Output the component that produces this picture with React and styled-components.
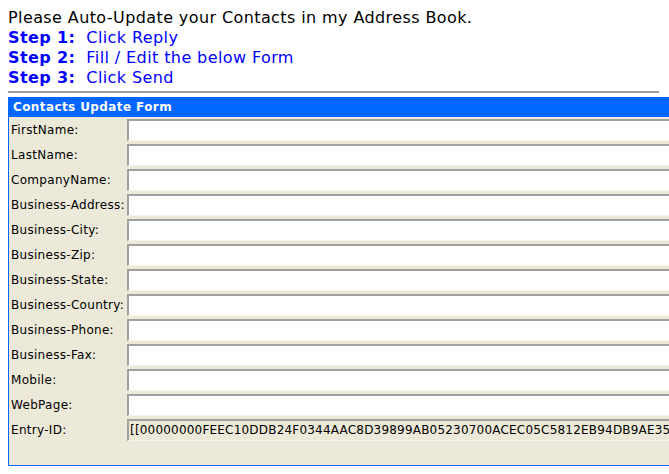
import React from "react";
import styled, { createGlobalStyle } from "styled-components";

const Global = createGlobalStyle`
  html, body { overflow: hidden; }
  body {
    margin: 8px 0 8px 8px;
    background: #ffffff;
    font-family: "DejaVu Sans", Verdana, sans-serif;
  }
`;

const Intro = styled.div`
  font-size: 16px;
  line-height: 20px;
  letter-spacing: 0.4px;
  color: #000000;
  white-space: nowrap;
`;

const StepLine = styled.div`
  color: #0000ff;
  white-space: pre;
`;

const StepLabel = styled.b`
  font-weight: bold;
`;

const Rule = styled.div`
  width: 651px;
  height: 2px;
  background: #a0a0a0;
  margin: 3px 0 4px 0;
`;

const Form = styled.div`
  width: 760px;
  border: 1px solid #0066ff;
  border-top: none;
  background: #ece9d8;
  font-family: "DejaVu Sans", Tahoma, sans-serif;
  font-size: 12px;
`;

const Header = styled.div`
  height: 20px;
  line-height: 20px;
  background: #0066ff;
  color: #ffffff;
  font-weight: bold;
  letter-spacing: 0.4px;
  margin: 0 -1px;
  padding-left: 5px;
`;

const Body = styled.div`
  display: flex;
  flex-direction: column;
  gap: 3px;
  padding: 2px 0 24px 0;
`;

const Row = styled.div`
  display: grid;
  grid-template-columns: 118px 1fr;
  align-items: center;
  height: 22px;
`;

const Label = styled.span`
  padding-left: 2px;
  color: #000000;
  letter-spacing: 0.3px;
  white-space: nowrap;
`;

const Field = styled.div`
  box-sizing: border-box;
  height: 22px;
  border-top: 2px solid #a0a0a0;
  border-left: 2px solid #a0a0a0;
  border-bottom: 1px solid #f4f3ee;
  border-right: 1px solid #f4f3ee;
  background: ${(p) => (p.$readOnly ? "#ece9d8" : "#ffffff")};
  padding-left: 1px;
  line-height: 19px;
  letter-spacing: 0.2px;
  white-space: nowrap;
  overflow: hidden;
  color: #000000;
`;

const fields = [
  "FirstName:",
  "LastName:",
  "CompanyName:",
  "Business-Address:",
  "Business-City:",
  "Business-Zip:",
  "Business-State:",
  "Business-Country:",
  "Business-Phone:",
  "Business-Fax:",
  "Mobile:",
  "WebPage:",
];

const steps = [
  ["Step 1:", "Click Reply"],
  ["Step 2:", "Fill / Edit the below Form"],
  ["Step 3:", "Click Send"],
];

export default function App() {
  return (
    <>
      <Global />
      <Intro>
        <div>Please Auto-Update your Contacts in my Address Book.</div>
        {steps.map(([s, t]) => (
          <StepLine key={s}>
            <StepLabel>{s}</StepLabel>
            {"  " + t}
          </StepLine>
        ))}
      </Intro>
      <Rule />
      <Form>
        <Header>Contacts Update Form</Header>
        <Body>
          {fields.map((f) => (
            <Row key={f}>
              <Label>{f}</Label>
              <Field />
            </Row>
          ))}
          <Row>
            <Label>Entry-ID:</Label>
            <Field $readOnly>
              [[00000000FEEC10DDB24F0344AAC8D39899AB05230700ACEC05C5812EB94DB9AE35000000000000000000
            </Field>
          </Row>
        </Body>
      </Form>
    </>
  );
}
